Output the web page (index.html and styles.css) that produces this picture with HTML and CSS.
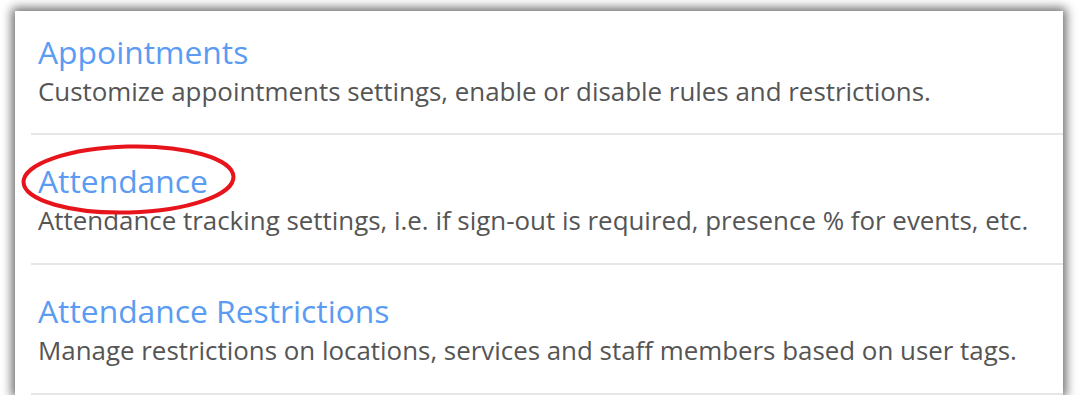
FILE: index.html
```html
<!DOCTYPE html>
<html>
<head>
<meta charset="utf-8">
<link rel="stylesheet" href="styles.css">
</head>
<body>
<div class="card">
  <div class="item">
    <div class="title">Appointments</div>
    <div class="desc">Customize appointments settings, enable or disable rules and restrictions.</div>
  </div>
  <div class="item">
    <div class="title">Attendance</div>
    <div class="desc">Attendance tracking settings, i.e. if sign-out is required, presence % for events, etc.</div>
    <svg class="circle" width="217" height="73" viewBox="0 0 217 73">
      <ellipse cx="108.5" cy="36.5" rx="105" ry="33" fill="none" stroke="#e8141b" stroke-width="4" transform="rotate(-1.5 108.5 36.5)"/>
    </svg>
  </div>
  <div class="item">
    <div class="title">Attendance Restrictions</div>
    <div class="desc">Manage restrictions on locations, services and staff members based on user tags.</div>
  </div>
</div>
</body>
</html>
```

FILE: styles.css
```css
html, body {
  margin: 0;
  padding: 0;
  background: #ffffff;
}
body {
  font-family: "Open Sans", "Liberation Sans", sans-serif;
}
.card {
  margin: 11px 0 0 15px;
  width: 1048px;
  height: 384px;
  box-sizing: border-box;
  padding-left: 16px;
  background: #ffffff;
  box-shadow: 0 0 10px 3px rgba(0, 0, 0, 0.6);
}
.item {
  position: relative;
  padding: 26px 0 28px 7px;
  border-bottom: 2px solid #e6e6e6;
}
.item:first-child {
  padding-top: 21px;
  padding-bottom: 27px;
}
.title {
  font-size: 31.8px;
  line-height: 40px;
  color: #5b9cf2;
}
.desc {
  margin-top: 4px;
  font-size: 25.9px;
  line-height: 30px;
  color: #555555;
}
.circle {
  position: absolute;
  left: -11px;
  top: 8px;
}
```
